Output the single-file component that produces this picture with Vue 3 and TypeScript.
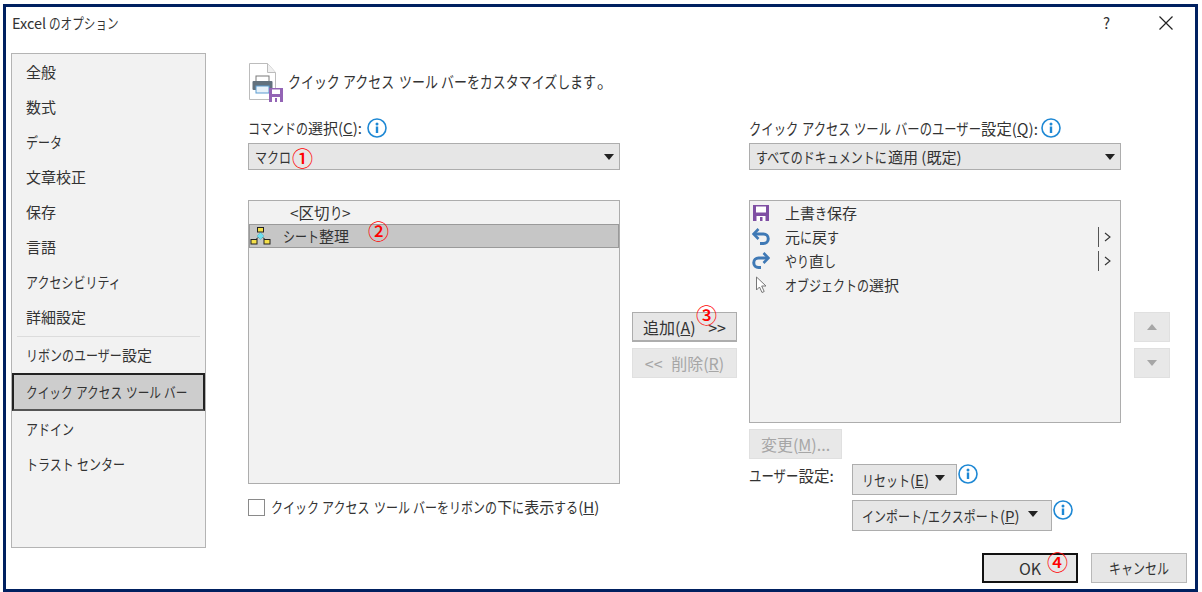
<script setup lang="ts">
import { h } from 'vue'

const T = (props: { t: string }) => {
  const parts = props.t.match(/[\u3041-\u30ff]+|&.|[^\u3041-\u30ff&]+/g) ?? []
  return h('span', { class: 'txt' }, parts.map((s) => {
    if (s[0] === '&') return h('u', s[1])
    if (/^[\u3041-\u30ff]/.test(s)) return h('span', { class: 'k', style: { width: `${s.length * 0.8}em` } }, s)
    return s
  }))
}

const navTop = ['全般', '数式', 'データ', '文章校正', '保存', '言語', 'アクセシビリティ', '詳細設定']
const navBottom = ['リボンのユーザー設定', 'クイック アクセス ツール バー', 'アドイン', 'トラスト センター']
</script>

<template>
  <div class="dialog">
    <header class="title">
      <T class="title-text" t="Excel のオプション" />
      <span class="help">?</span>
      <svg class="close" width="14" height="14" viewBox="0 0 14 14"><path d="M.5.5l13 13M13.5.5l-13 13" stroke="#222" stroke-width="1.2" fill="none" /></svg>
    </header>

    <div class="body">
      <nav class="side">
        <div v-for="n in navTop" :key="n" class="nav"><T :t="n" /></div>
        <div class="nav-sep"></div>
        <div
          v-for="n in navBottom"
          :key="n"
          class="nav"
          :class="{ active: n.startsWith('クイック'), tall: n.startsWith('リボン') }"
        ><T :t="n" /></div>
      </nav>

      <main class="main">
        <div class="head">
          <svg class="head-icon" width="36" height="40" viewBox="0 0 36 40">
            <path d="M1.5.5h18l8 9v27h-26z" fill="#fff" stroke="#bcbcbc" />
            <path d="M19.5.5v9h8" fill="#f0f0f0" stroke="#bcbcbc" />
            <rect x="8" y="13" width="13" height="6" fill="#fff" stroke="#7a7a7a" />
            <rect x="4.5" y="18" width="20" height="9" rx="1" fill="#62717d" />
            <rect x="8" y="23" width="13" height="7" fill="#e8f2f9" stroke="#5b9bd0" />
            <g>
              <rect x="21" y="25" width="14" height="14" fill="#9364b5" />
              <rect x="24" y="26.5" width="8" height="4.5" fill="#fff" />
              <rect x="24" y="34" width="8" height="5" fill="#fff" />
              <rect x="27" y="35" width="2" height="4" fill="#9364b5" />
            </g>
          </svg>
          <T class="head-text" t="クイック アクセス ツール バーをカスタマイズします。" />
        </div>

        <div class="cols">
          <section class="col">
            <div class="label label-left">
              <T t="コマンドの選択(&C):" />
              <svg class="info" width="20" height="20" viewBox="0 0 20 20"><circle cx="10" cy="10" r="9" fill="#fff" stroke="#1e88d4" stroke-width="1.6" /><circle cx="10" cy="6" r="1.5" fill="#1e88d4" /><rect x="8.8" y="8.5" width="2.4" height="6.5" fill="#1e88d4" /></svg>
            </div>
            <div class="combo">
              <span class="combo-text"><T t="マクロ" /><span class="mark mark-1">①</span></span>
              <i class="caret"></i>
            </div>
            <div class="list left-list">
              <div class="row sep-row"><T t="<区切り>" /></div>
              <div class="row selected">
                <svg class="row-icon" width="21" height="20" viewBox="0 0 21 20">
                  <path d="M10.5 6v4M10.5 10l-7 5M10.5 10l7 5" stroke="#333" fill="none" />
                  <rect x="7.5" y="1.5" width="6" height="4.5" fill="#f5e04a" stroke="#222" />
                  <rect x="1" y="13.5" width="6" height="4.5" fill="#f5e04a" stroke="#222" />
                  <rect x="14" y="13.5" width="6" height="4.5" fill="#f5e04a" stroke="#222" />
                  <path d="M10.5 6.5l3.5 3.5-3.5 3.5-3.5-3.5z" fill="#6fe0f0" stroke="#5ab4c4" stroke-width=".6" />
                </svg>
                <T class="sel-text" t="シート整理" />
                <span class="mark mark-2">②</span>
              </div>
            </div>
            <label class="check">
              <span class="box"></span>
              <T t="クイック アクセス ツール バーをリボンの下に表示する(&H)" />
            </label>
          </section>

          <section class="mid">
            <button class="btn add"><T t="追加(&A) >>" /><span class="mark mark-3">③</span></button>
            <button class="btn off del"><T t="<< 削除(&R)" /></button>
          </section>

          <section class="col">
            <div class="label label-right">
              <T t="クイック アクセス ツール バーのユーザー設定(&Q):" />
              <svg class="info" width="20" height="20" viewBox="0 0 20 20"><circle cx="10" cy="10" r="9" fill="#fff" stroke="#1e88d4" stroke-width="1.6" /><circle cx="10" cy="6" r="1.5" fill="#1e88d4" /><rect x="8.8" y="8.5" width="2.4" height="6.5" fill="#1e88d4" /></svg>
            </div>
            <div class="combo">
              <span class="combo-text"><T t="すべてのドキュメントに適用 (既定)" /></span>
              <i class="caret"></i>
            </div>
            <div class="list right-list">
              <div class="row qa">
                <svg class="qa-icon" width="18" height="18" viewBox="0 0 18 18">
                  <rect x="1" y="1" width="16" height="16" fill="#7f4fa3" />
                  <rect x="4" y="2.5" width="10" height="6" fill="#fff" />
                  <rect x="4.5" y="12" width="9" height="5" fill="#fff" />
                  <rect x="8" y="13" width="2.5" height="4" fill="#7f4fa3" />
                </svg>
                <T t="上書き保存" />
              </div>
              <div class="row qa">
                <svg class="qa-icon" width="18" height="18" viewBox="0 0 18 18">
                  <path d="M3 6h8.5a4.5 4.5 0 0 1 0 9.5H8" fill="none" stroke="#3f79b5" stroke-width="3" />
                  <path d="M6.5 1L1.5 6l5 5" fill="none" stroke="#3f79b5" stroke-width="2.6" />
                </svg>
                <T t="元に戻す" />
                <span class="more"><svg width="7" height="10" viewBox="0 0 7 10"><path d="M1 1l5 4-5 4" fill="none" stroke="#333" stroke-width="1.1" /></svg></span>
              </div>
              <div class="row qa">
                <svg class="qa-icon" width="18" height="18" viewBox="0 0 18 18">
                  <path d="M15 6H6.5a4.5 4.5 0 0 0 0 9.5H9" fill="none" stroke="#3f79b5" stroke-width="3" />
                  <path d="M11.5 1l5 5-5 5" fill="none" stroke="#3f79b5" stroke-width="2.6" />
                </svg>
                <T t="やり直し" />
                <span class="more"><svg width="7" height="10" viewBox="0 0 7 10"><path d="M1 1l5 4-5 4" fill="none" stroke="#333" stroke-width="1.1" /></svg></span>
              </div>
              <div class="row qa">
                <svg class="qa-icon" width="18" height="18" viewBox="0 0 18 18">
                  <path d="M4.5 1v13l3-3 2.5 5.5 2.2-1L9.7 10H14z" fill="#fff" stroke="#777" stroke-width="1" />
                </svg>
                <T t="オブジェクトの選択" />
              </div>
            </div>
            <button class="btn off change"><T t="変更(&M)..." /></button>
            <div class="user">
              <span class="user-label"><T t="ユーザー設定:" /></span>
              <div class="user-btns">
                <div class="user-line">
                  <button class="btn drop reset"><T t="リセット(&E)" /><i class="caret"></i></button>
                  <svg class="info" width="20" height="20" viewBox="0 0 20 20"><circle cx="10" cy="10" r="9" fill="#fff" stroke="#1e88d4" stroke-width="1.6" /><circle cx="10" cy="6" r="1.5" fill="#1e88d4" /><rect x="8.8" y="8.5" width="2.4" height="6.5" fill="#1e88d4" /></svg>
                </div>
                <div class="user-line">
                  <button class="btn drop export"><T t="インポート/エクスポート(&P)" /><i class="caret"></i></button>
                  <svg class="info" width="20" height="20" viewBox="0 0 20 20"><circle cx="10" cy="10" r="9" fill="#fff" stroke="#1e88d4" stroke-width="1.6" /><circle cx="10" cy="6" r="1.5" fill="#1e88d4" /><rect x="8.8" y="8.5" width="2.4" height="6.5" fill="#1e88d4" /></svg>
                </div>
              </div>
            </div>
          </section>

          <section class="arrows">
            <button class="btn off arrow"><i class="tri up"></i></button>
            <button class="btn off arrow"><i class="tri down"></i></button>
          </section>
        </div>
      </main>
    </div>

    <footer class="foot">
      <button class="btn ok">OK<span class="mark mark-4">④</span></button>
      <button class="btn cancel"><T t="キャンセル" /></button>
    </footer>
  </div>
</template>

<style>
html, body { background: #fff; }
.txt { white-space: nowrap; }
.k {
  display: inline-block;
  white-space: nowrap;
  transform: scaleX(0.8);
  transform-origin: 0 50%;
}
</style>

<style scoped>
.dialog {
  box-sizing: border-box;
  width: 1195px;
  height: 588px;
  margin: 4px 0 0 3px;
  border: 3px solid #002060;
  background: #fff;
  display: flex;
  flex-direction: column;
  font-family: "Noto Sans CJK JP", "Noto Sans", sans-serif;
  font-size: 15px;
  line-height: 20px;
  color: #333;
  overflow: hidden;
}
.title {
  height: 46px;
  flex: none;
  display: flex;
  align-items: center;
  padding: 0 22px 14px 6px;
  box-sizing: border-box;
}
.title-text { font-size: 14.5px; }
.help { margin-left: auto; margin-right: 49px; font-size: 15px; }
.body { display: flex; height: 495px; flex: none; padding-left: 5px; }
.side {
  box-sizing: border-box;
  width: 195px;
  height: 495px;
  flex: none;
  background: #f2f2f2;
  border: 1px solid #b4b4b4;
}
.nav { height: 35px; display: flex; align-items: center; padding-left: 14px; box-sizing: border-box; }
.nav-sep { height: 1px; background: #dcdcdc; margin: 2px 5px 0; }
.nav.tall { height: 36px; }
.nav.active {
  height: 38px;
  background: #cdcdcd;
  border: 2px solid #222;
  border-bottom-color: #555;
  padding-left: 12px;
}
.nav.active .txt { font-size: 14.6px; }
.main { margin-left: 42px; padding-top: 10px; }
.head { display: flex; align-items: flex-start; height: 38px; }
.head-text { margin-left: 4px; margin-top: 8px; font-size: 16.2px; }
.head-icon { flex: none; }
.cols { display: flex; margin-top: 17px; }
.col { width: 372px; flex: none; }
.label { display: flex; align-items: center; height: 20px; gap: 3px; }
.label-left { gap: 5px; }
.label-right { font-size: 15.4px; }
.info { flex: none; }
.combo {
  box-sizing: border-box;
  height: 27px;
  margin-top: 5px;
  background: #e6e6e6;
  border: 1px solid #adadad;
  display: flex;
  align-items: center;
  padding: 0 5px 0 6px;
}
.combo-text { position: relative; }
.caret {
  display: block;
  width: 0;
  height: 0;
  border-left: 5px solid transparent;
  border-right: 5px solid transparent;
  border-top: 6px solid #222;
  margin-left: auto;
  flex: none;
}
.list { box-sizing: border-box; margin-top: 30px; background: #f2f2f2; border: 1px solid #adadad; }
.left-list { height: 284px; }
.right-list { height: 223px; }
.row { display: flex; align-items: center; height: 24px; box-sizing: border-box; position: relative; }
.sep-row { padding-left: 41px; font-size: 15.5px; }
.left-list .row:first-child { height: 22px; }
.left-list .selected { margin-top: 1px; }
.selected { background: #c6c6c6; border: 1px solid #9a9a9a; }
.row-icon { margin-left: 0; flex: none; }
.sel-text { margin-left: 12px; }
.qa-icon { margin-left: 2px; margin-right: 15px; flex: none; }
.qa { padding-right: 9px; }
.more {
  margin-left: auto;
  display: flex;
  align-items: center;
  height: 20px;
  padding-left: 5px;
  border-left: 1px solid #555;
}
.check { display: flex; align-items: center; margin-top: 14px; height: 18px; }
.box { box-sizing: border-box; width: 17px; height: 17px; border: 1px solid #8a8a8a; background: #fff; margin-right: 6px; flex: none; }
.mid { width: 105px; flex: none; margin: 0 12px; padding-top: 194px; }
.btn {
  box-sizing: border-box;
  display: flex;
  align-items: center;
  justify-content: center;
  height: 30px;
  width: 100%;
  margin: 0;
  padding: 0;
  font: inherit;
  color: inherit;
  background: #e6e6e6;
  border: 1px solid #adadad;
  position: relative;
}
.add { border-bottom-width: 2px; font-size: 16px; word-spacing: 9px; }
.del { font-size: 16px; word-spacing: 5px; }
.off { background: #e8e8e8; border-color: #e0e0e0; color: #a6a6a6; margin-top: 6px; }
.change { width: 93px; font-size: 16px; }
.user { display: flex; margin-top: 5px; }
.user-label { width: 103px; flex: none; height: 22px; padding-top: 1px; font-size: 15.5px; }
.user-btns { display: flex; flex-direction: column; gap: 5px; }
.user-line { display: flex; align-items: flex-start; gap: 1px; }
.drop { height: 31px; justify-content: flex-start; padding-left: 9px; }
.drop .caret { margin-left: 8px; margin-top: -3px; }
.reset .caret { margin-left: 6px; }
.reset { width: 105px; }
.export { width: 200px; }
.arrows { width: 36px; flex: none; margin-left: 13px; padding-top: 188px; }
.arrow { height: 30px; }
.tri { display: block; width: 0; height: 0; border-left: 5px solid transparent; border-right: 5px solid transparent; }
.up { border-bottom: 6px solid #a6a6a6; }
.down { border-top: 6px solid #a6a6a6; }
.foot { display: flex; justify-content: flex-end; gap: 13px; padding: 5px 8px 0 0; }
.ok, .cancel { width: 96px; height: 30px; }
.ok { border: 2px solid #111; font-size: 16px; }
.cancel { border-color: #b8b8b8; }
.mark { position: absolute; color: #f00; font-size: 21px; line-height: 20px; font-weight: 500; }
.mark-1 { left: 37px; top: 0; }
.mark-2 { left: 118px; top: -5px; }
.mark-3 { left: 63px; top: -9px; }
.mark-4 { left: 63px; top: -4px; }
</style>
